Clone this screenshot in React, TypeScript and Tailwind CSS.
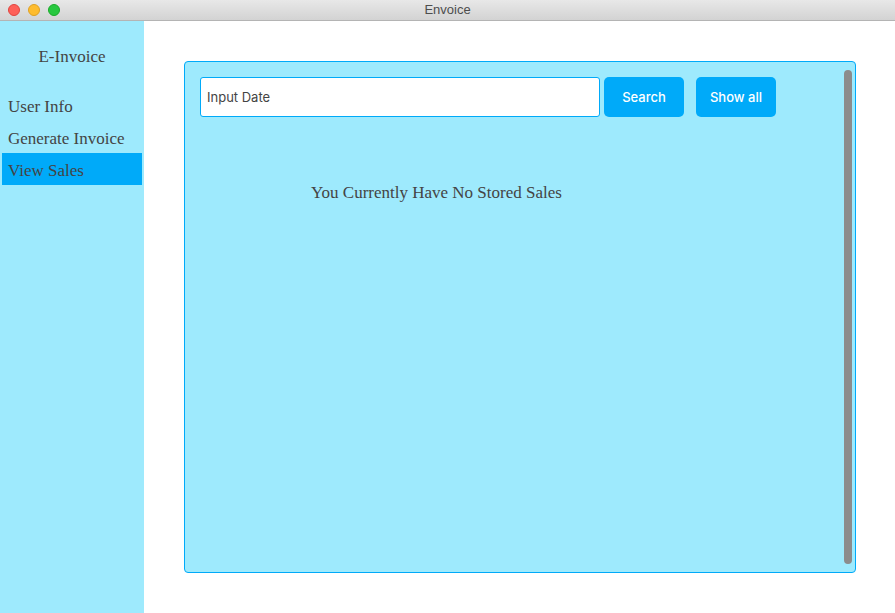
export default function App() {
  const items = ['User Info', 'Generate Invoice', 'View Sales'];
  const active = 'View Sales';

  return (
    <div className="w-[895px] h-[613px] flex flex-col bg-white overflow-hidden">
      {/* title bar */}
      <div className="relative h-[21px] shrink-0 flex items-center justify-center bg-gradient-to-b from-[#e8e8e8] to-[#d3d3d3] border-b border-[#b4b4b4]">
        <div className="absolute left-[8px] top-[4px] flex gap-[8px]">
          <span className="w-[12px] h-[12px] rounded-full bg-[#fe5f57] border border-[#e0443e]" />
          <span className="w-[12px] h-[12px] rounded-full bg-[#febc2e] border border-[#dea123]" />
          <span className="w-[12px] h-[12px] rounded-full bg-[#28c840] border border-[#1aab29]" />
        </div>
        <span className="text-[13px] text-[#4d4d4d] font-['Liberation_Sans',sans-serif]">Envoice</span>
      </div>

      <div className="flex flex-1 min-h-0">
        {/* sidebar */}
        <div className="w-[144px] shrink-0 bg-[#9eeafd] px-[2px] font-['Liberation_Serif',serif] text-[#444]">
          <div className="pt-[23px] h-[68px] text-center text-[17px]">E-Invoice</div>
          <div className="flex flex-col">
            {items.map((it) => (
              <div
                key={it}
                className={`h-[32px] flex items-center pt-[3px] pl-[6px] text-[17px] ${it === active ? 'bg-[#00aaf9]' : ''}`}
              >
                {it}
              </div>
            ))}
          </div>
        </div>

        {/* main */}
        <div className="flex-1 pl-[40px] pr-[39px] pt-[40px] pb-[40px]">
          <div className="h-full flex bg-[#9eeafd] border border-[#00aaf9] rounded-[4px]">
            <div className="flex-1 flex flex-col pl-[15px] pt-[15px]">
              <div className="flex items-center font-['Inter','Liberation_Sans',sans-serif]">
                <input
                  readOnly
                  value="Input Date"
                  className="w-[400px] h-[40px] bg-white border border-[#00aaf9] rounded-[3px] px-[6px] text-[13px] text-[#444] outline-none"
                />
                <button className="ml-[4px] w-[80px] h-[40px] pt-[1px] rounded-[5px] bg-[#00aaf9] text-white text-[13px] font-medium">
                  Search
                </button>
                <button className="ml-[12px] w-[80px] h-[40px] pt-[1px] rounded-[5px] bg-[#00aaf9] text-white text-[13px] font-medium">
                  Show all
                </button>
              </div>
              <div className="mt-[64px] pl-[111px] text-[17px] leading-[24px] text-[#444] font-['Liberation_Serif',serif]">
                You Currently Have No Stored Sales
              </div>
            </div>
            <div className="w-[8px] mr-[3px] my-[8px] rounded-full bg-[#8c8c8c]" />
          </div>
        </div>
      </div>
    </div>
  );
}
